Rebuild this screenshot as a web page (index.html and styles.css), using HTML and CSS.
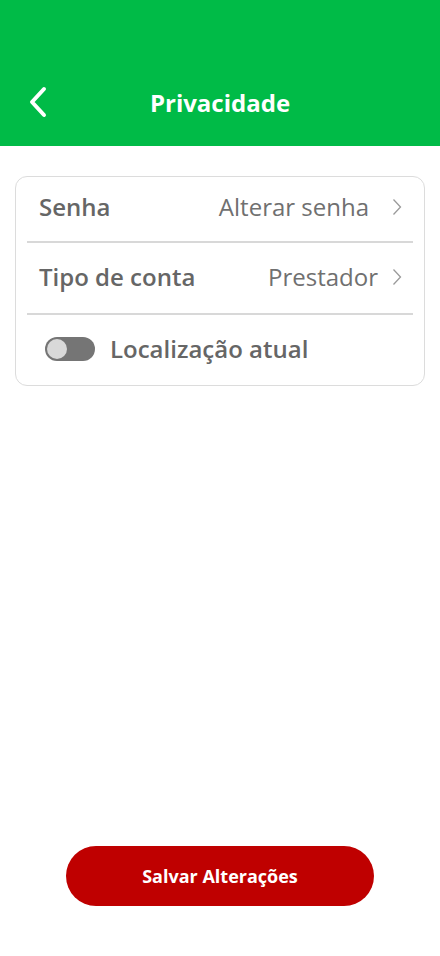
FILE: index.html
```html
<!DOCTYPE html>
<html lang="pt">
<head>
<meta charset="utf-8">
<link rel="stylesheet" href="styles.css">
</head>
<body>
<div class="screen">
  <header class="topbar">
    <button class="back" aria-label="Voltar">
      <svg width="22" height="32" viewBox="0 0 22 32"><path d="M17 3 L5 16 L17 29" fill="none" stroke="#fff" stroke-width="4" stroke-linecap="round" stroke-linejoin="round"/></svg>
    </button>
    <h1 class="title">Privacidade</h1>
  </header>
  <main class="content">
    <section class="card">
      <div class="row row-first">
        <span class="label">Senha</span>
        <span class="value"><span class="value-text wide">Alterar senha</span>
          <svg class="chev" width="10" height="18" viewBox="0 0 10 18"><path d="M1.5 1.5 L8.5 9 L1.5 16.5" fill="none" stroke="#9a9a9a" stroke-width="1.3"/></svg>
        </span>
      </div>
      <div class="divider"></div>
      <div class="row">
        <span class="label">Tipo de conta</span>
        <span class="value"><span class="value-text">Prestador</span>
          <svg class="chev" width="10" height="18" viewBox="0 0 10 18"><path d="M1.5 1.5 L8.5 9 L1.5 16.5" fill="none" stroke="#9a9a9a" stroke-width="1.3"/></svg>
        </span>
      </div>
      <div class="divider"></div>
      <div class="row toggle-row">
        <span class="switch"><span class="knob"></span></span>
        <span class="label">Localização atual</span>
      </div>
    </section>
  </main>
  <footer class="footer">
    <button class="save">Salvar Alterações</button>
  </footer>
</div>
</body>
</html>
```
FILE: styles.css
```css
* { box-sizing: border-box; }
html, body { margin: 0; padding: 0; background: #fff; }
body { font-family: "Open Sans", "Noto Sans", sans-serif; }
.screen { width: 440px; height: 956px; display: flex; flex-direction: column; }
.topbar {
  height: 146px;
  background: #00bb47;
  display: flex;
  align-items: center;
  padding: 58px 0 0 0;
  position: relative;
}
.back {
  background: none; border: 0; padding: 0;
  margin-left: 27px;
  width: 22px; height: 32px;
  display: flex;
}
.title {
  position: absolute;
  left: 0; right: 0; top: 58px; bottom: 0;
  margin: 0;
  display: flex; align-items: center; justify-content: center;
  color: #fff;
  font-size: 24px;
  font-weight: 700;
  pointer-events: none;
}
.content { padding: 30px 15px 0; flex: 1; }
.card {
  border: 1px solid #dcdcdc;
  border-radius: 12px;
  padding: 0 11px;
}
.row {
  height: 70px;
  display: flex;
  align-items: center;
  justify-content: space-between;
  padding: 0 11px 4px 12px;
  color: #666;
}
.row-first { height: 64px; padding-bottom: 5px; }
.label { font-size: 24px; font-weight: 600; color: #666; }
.value { font-size: 24px; font-weight: 400; color: #707070; display: flex; align-items: center; gap: 14px; }
.value-text.wide { margin-right: 9px; }
.chev { margin-top: 1px; }
.divider { height: 2px; background: #d8d8d8; }
.toggle-row { justify-content: flex-start; gap: 15px; padding-left: 18px; }
.switch {
  width: 50px; height: 24px;
  border-radius: 12px;
  background: #757575;
  position: relative;
  display: inline-block;
  margin-top: 1px;
}
.knob {
  position: absolute;
  left: 2px; top: 2px;
  width: 20px; height: 20px;
  border-radius: 50%;
  background: #d9d9d9;
}
.footer { padding: 0 66px 50px; }
.save {
  width: 100%;
  height: 60px;
  border: 0;
  border-radius: 30px;
  background: #bf0000;
  color: #fff;
  font-family: "Open Sans", "Noto Sans", sans-serif;
  font-size: 18px;
  font-weight: 700;
}
```
